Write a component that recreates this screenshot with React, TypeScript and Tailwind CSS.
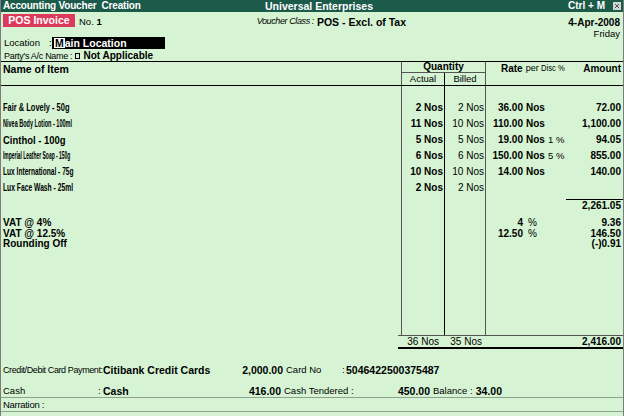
const items = [
  { name: "Fair & Lovely - 50g", cls: "text-[11.5px] scale-x-[0.65]", actual: "2 Nos", billed: "2 Nos", rate: "36.00", per: "Nos", disc: "", amount: "72.00" },
  { name: "Nivea Body Lotion - 100ml", cls: "text-[11.5px] scale-x-[0.48]", actual: "11 Nos", billed: "10 Nos", rate: "110.00", per: "Nos", disc: "", amount: "1,100.00" },
  { name: "Cinthol  - 100g", cls: "text-[11px] scale-x-[0.86]", actual: "5 Nos", billed: "5 Nos", rate: "19.00", per: "Nos", disc: "1 %", amount: "94.05" },
  { name: "Imperial Leather Soap - 150g", cls: "text-[11.5px] scale-x-[0.43]", actual: "6 Nos", billed: "6 Nos", rate: "150.00", per: "Nos", disc: "5 %", amount: "855.00" },
  { name: "Lux International - 75g", cls: "text-[11.5px] scale-x-[0.575] font-semibold", actual: "10 Nos", billed: "10 Nos", rate: "14.00", per: "Nos", disc: "", amount: "140.00" },
  { name: "Lux Face Wash - 25ml", cls: "text-[11.5px] scale-x-[0.585]", actual: "2 Nos", billed: "2 Nos", rate: "", per: "", disc: "", amount: "" },
];

const taxes = [
  { name: "VAT @ 4%", rate: "4", per: "%", amount: "9.36" },
  { name: "VAT @ 12.5%", rate: "12.50", per: "%", amount: "146.50" },
  { name: "Rounding Off", rate: "", per: "", amount: "(-)0.91" },
];

function Row({
  h,
  name,
  actual,
  billed,
  rest,
}: {
  h: string;
  name?: React.ReactNode;
  actual?: React.ReactNode;
  billed?: React.ReactNode;
  rest?: React.ReactNode;
}) {
  return (
    <div className={`grid grid-cols-[400px_43px_41px_1fr] ${h}`}>
      <div className="flex items-center overflow-hidden pl-[2px] whitespace-nowrap">{name}</div>
      <div className="flex items-center justify-end border-l border-[#555] pr-[1px] text-[10px] font-bold">
        {actual}
      </div>
      <div className="flex items-center justify-end border-l border-black pr-[1px] text-[10px]">
        {billed}
      </div>
      <div className="flex items-center border-l border-[#555] text-[10px]">{rest}</div>
    </div>
  );
}

export default function App() {
  return (
    <div className="flex h-[416px] w-[624px] flex-col overflow-hidden border-x border-[#7c7c7c] bg-[#d6f4d4] font-['Liberation_Sans',Arial,sans-serif] leading-none text-black">
      {/* Title bar */}
      <div className="flex h-[12px] items-center bg-[#1c5a4a] pl-[2px] pr-[2px] text-[10px] font-bold text-white">
        <span className="w-[262px] tracking-[-0.2px]">Accounting Voucher&nbsp; Creation</span>
        <span className="text-[10.5px]">Universal Enterprises</span>
        <span className="ml-auto mr-[8px]">Ctrl + M</span>
        <span className="flex h-[8px] w-[8px] items-center justify-center bg-[#cfd6d2]">
          <svg width="6" height="6" viewBox="0 0 6 6">
            <path d="M1 1L5 5M5 1L1 5" stroke="#555" strokeWidth="1" />
          </svg>
        </span>
      </div>

      {/* Voucher type row */}
      <div className="flex h-[25px] pt-[2px] whitespace-nowrap">
        <div className="ml-[2px] flex h-[13px] w-[72px] items-center justify-center bg-[#dc3a5c] text-[10.5px] font-bold text-white">
          POS Invoice
        </div>
        <div className="ml-[4px] mt-[3px] text-[9.5px]">
          No. <span className="font-bold">1</span>
        </div>
        <div className="ml-[155px] mt-[3px] text-[9px] italic tracking-[-0.4px]">Voucher Class :</div>
        <div className="ml-[3px] mt-[3px] text-[10.5px] font-bold">POS - Excl. of Tax</div>
        <div className="ml-auto mr-[3px] mt-[4px] flex flex-col items-end gap-[1px]">
          <span className="text-[10px] font-bold">4-Apr-2008</span>
          <span className="text-[9.5px]">Friday</span>
        </div>
      </div>

      {/* Location */}
      <div className="flex h-[12px] items-center">
        <span className="w-[48px] pl-[3px] text-[9.5px]">Location</span>
        <span className="w-[3px] text-[9.5px]">:</span>
        <div className="flex h-[12px] w-[113px] items-center bg-black pl-[2px] text-[10.5px] font-bold text-white">
          <span className="bg-white px-[1px] text-black">M</span>ain Location
        </div>
      </div>

      {/* Party */}
      <div className="flex h-[12px] items-center pl-[3px] pt-[2px] text-[9px] whitespace-nowrap">
        <span className="tracking-[-0.3px]">Party's A/c Name</span>
        <span className="ml-[2px]">:</span>
        <span className="ml-[3px] inline-block h-[6px] w-[5px] border border-black" />
        <span className="ml-[3px] text-[10px] font-bold">Not Applicable</span>
      </div>

      {/* Table header */}
      <div className="grid h-[25px] grid-cols-[400px_84px_1fr] border-y border-black">
        <div className="pl-[2px] pt-[2px] text-[10.5px] font-bold">Name of Item</div>
        <div className="flex flex-col border-l border-[#555]">
          <div className="flex h-[11px] items-center justify-center border-b border-[#555] text-[10px] font-bold">
            Quantity
          </div>
          <div className="flex flex-1 text-[9.5px]">
            <div className="flex w-[42px] items-center justify-center">Actual</div>
            <div className="flex flex-1 items-center justify-center border-l border-black">Billed</div>
          </div>
        </div>
        <div className="flex items-start border-l border-[#555] pt-[2px] text-[10px] whitespace-nowrap">
          <span className="ml-[15px] font-bold">Rate</span>
          <span className="ml-[3px] text-[9px]">per</span>
          <span className="ml-[2px] inline-block origin-left scale-x-[0.85] text-[9px]">Disc %</span>
          <span className="ml-auto pr-[2px] font-bold">Amount</span>
        </div>
      </div>

      {/* Table body */}
      <div className="flex h-[249px] flex-col">
        <Row h="h-[14px]" />
        {items.map((it) => (
          <Row
            key={it.name}
            h="h-[16px]"
            name={<span className={`inline-block origin-left font-bold ${it.cls}`}>{it.name}</span>}
            actual={it.actual}
            billed={it.billed}
            rest={
              <>
                <span className="w-[37px] text-right font-bold">{it.rate}</span>
                <span className="w-[25px] pl-[3px] font-bold">{it.per}</span>
                <span className="w-[22px] text-[9.5px]">{it.disc}</span>
                <span className="flex-1 pr-[2px] text-right font-bold">{it.amount}</span>
              </>
            }
          />
        ))}
        <Row h="h-[3px]" />
        <Row
          h="h-[12px]"
          rest={
            <div className="flex h-full flex-1 justify-end">
              <span className="flex w-[57px] items-center justify-end border-t border-black pr-[2px] font-bold">
                2,261.05
              </span>
            </div>
          }
        />
        <Row h="h-[7px]" />
        {taxes.map((t) => (
          <Row
            key={t.name}
            h="h-[10.5px]"
            name={<span className="text-[10px] font-bold">{t.name}</span>}
            rest={
              <>
                <span className="w-[37px] text-right font-bold">{t.rate}</span>
                <span className="w-[25px] pl-[5px]">{t.per}</span>
                <span className="w-[22px]" />
                <span className="flex-1 pr-[2px] text-right font-bold">{t.amount}</span>
              </>
            }
          />
        ))}
        <div className="flex-1">
          <Row h="h-full" />
        </div>
      </div>

      {/* Totals */}
      <div className="ml-[397px] grid h-[14px] grid-cols-[46px_41px_1fr] border-t border-b-2 border-t-[#555] border-b-black text-[10px]">
        <span className="flex items-center justify-end pr-[5px]">36 Nos</span>
        <span className="flex items-center justify-end pr-[3px]">35 Nos</span>
        <span className="flex items-center justify-end pr-[2px] font-bold">2,416.00</span>
      </div>

      <div className="h-[15px]" />

      {/* Card payment */}
      <div className="flex h-[12px] items-center text-[9px] whitespace-nowrap">
        <span className="w-[100px] pl-[2px] tracking-[-0.4px]">Credit/Debit Card Payment:</span>
        <span className="ml-[2px] w-[130px] text-[10.5px] font-bold">Citibank Credit Cards</span>
        <span className="w-[50px] text-right text-[10.5px] font-bold">2,000.00</span>
        <span className="ml-[3px] w-[56px] text-[9.5px]">Card No</span>
        <span className="w-[4px] text-[9.5px]">:</span>
        <span className="text-[10.5px] font-bold">5046422500375487</span>
      </div>

      <div className="h-[9px]" />

      {/* Cash */}
      <div className="flex h-[12px] items-center text-[9.5px] whitespace-nowrap">
        <span className="w-[97px] pl-[2px]">Cash</span>
        <span className="w-[5px]">:</span>
        <span className="w-[128px] text-[10.5px] font-bold">Cash</span>
        <span className="w-[50px] text-right text-[10.5px] font-bold">416.00</span>
        <span className="ml-[3px] w-[104px]">Cash Tendered :</span>
        <span className="w-[42px] text-right text-[10.5px] font-bold">450.00</span>
        <span className="ml-[3px] w-[40px]">Balance :</span>
        <span className="w-[29px] text-right text-[10.5px] font-bold">34.00</span>
      </div>

      {/* Narration */}
      <div className="flex h-[15px] items-center border-y border-[#8fa08f] pl-[2px] text-[9.5px]">
        <span className="tracking-[-0.3px]">Narration :</span>
      </div>
    </div>
  );
}
